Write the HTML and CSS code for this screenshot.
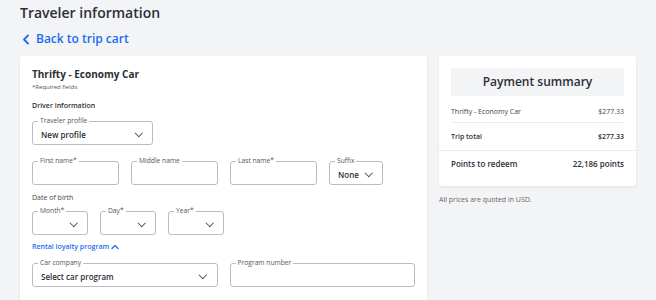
FILE: index.html
```html
<!DOCTYPE html>
<html lang="en">
<head>
    <meta charset="UTF-8">
    <meta name="viewport" content="width=device-width, initial-scale=1.0">
    <title>Traveler information</title>
    <link rel="stylesheet" href="styles.css">
</head>
<body>
    <h1 class="page-title">Traveler information</h1>
    <a class="back-link" href="#">
        <svg width="8" height="11" viewBox="0 0 8 11"><path d="M6 1.5 L2 5.5 L6 9.5" fill="none" stroke="#1a6df0" stroke-width="1.8" stroke-linecap="round" stroke-linejoin="round"/></svg>
        Back to trip cart
    </a>

    <div class="layout">
        <div class="card form-card">
            <h2 class="car-title">Thrifty - Economy Car</h2>
            <div class="required">*Required fields</div>
            <div class="section-label">Driver information</div>

            <div class="field select w-profile">
                <span class="label">Traveler profile</span>
                <span class="value">New profile</span>
                <span class="chev"></span>
            </div>

            <div class="row name-row">
                <div class="field w-name"><span class="label">First name*</span></div>
                <div class="field w-name"><span class="label">Middle name</span></div>
                <div class="field w-name"><span class="label">Last name*</span></div>
                <div class="field select w-suffix">
                    <span class="label">Suffix</span>
                    <span class="value">None</span>
                    <span class="chev"></span>
                </div>
            </div>

            <div class="section-label dob">Date of birth</div>
            <div class="row">
                <div class="field select w-date"><span class="label">Month*</span><span class="chev"></span></div>
                <div class="field select w-date"><span class="label">Day*</span><span class="chev"></span></div>
                <div class="field select w-date"><span class="label">Year*</span><span class="chev"></span></div>
            </div>

            <a class="loyalty" href="#">Rental loyalty program
                <svg width="8" height="6" viewBox="0 0 8 6"><path d="M1 4.5 L4 1.5 L7 4.5" fill="none" stroke="#1a6df0" stroke-width="1.3" stroke-linecap="round" stroke-linejoin="round"/></svg>
            </a>
            <div class="row">
                <div class="field select w-half">
                    <span class="label">Car company</span>
                    <span class="value">Select car program</span>
                    <span class="chev"></span>
                </div>
                <div class="field w-half"><span class="label">Program number</span></div>
            </div>
        </div>

        <div class="side">
            <div class="card summary">
                <div class="summary-head">Payment summary</div>
                <div class="sum-row item"><span>Thrifty - Economy Car</span><span>$277.33</span></div>
                <div class="sum-row total"><span>Trip total</span><span>$277.33</span></div>
                <div class="sum-row points"><span>Points to redeem</span><span>22,186 points</span></div>
            </div>
            <p class="note">All prices are quoted in USD.</p>
        </div>
    </div>
</body>
</html>
```

FILE: styles.css
```css
body
{
    margin: 0;
    padding: 0 20px;
    background-color: #f3f4f6;
    font-family: "Open Sans", "Noto Sans", sans-serif;
    color: #2b2f36;
}
.page-title
{
    margin: 0;
    padding-top: 3px;
    font-size: 14px;
    font-weight: 600;
    line-height: 20px;
}
.back-link
{
    display: flex;
    align-items: center;
    gap: 6px;
    margin-top: 8px;
    padding-left: 2px;
    color: #1a6df0;
    font-size: 12px;
    font-weight: 600;
    text-decoration: none;
    line-height: 16px;
}
.layout
{
    display: flex;
    align-items: flex-start;
    gap: 12px;
    margin-top: 9px;
}
.card
{
    background: #fff;
    border-radius: 3px;
    box-shadow: 0 1px 3px rgba(0, 0, 0, 0.08);
}
.form-card
{
    width: 407px;
    height: 260px;
    padding: 11px 12px 0 12px;
    box-sizing: border-box;
}
.car-title
{
    margin: 0;
    font-size: 10px;
    font-weight: 700;
    line-height: 14px;
}
.required
{
    font-size: 6px;
    color: #555;
    margin-top: 2px;
}
.section-label
{
    font-size: 7px;
    font-weight: 600;
    margin-top: 10px;
}
.section-label.dob
{
    font-weight: 400;
    color: #444;
    margin-top: 8px;
}
.row
{
    display: flex;
    gap: 12px;
}
.name-row
{
    margin-top: 16px;
}
.field
{
    position: relative;
    height: 24px;
    border: 1px solid #b9bcc2;
    border-radius: 3px;
    box-sizing: border-box;
    display: flex;
    align-items: center;
    padding: 0 8px;
}
.label
{
    position: absolute;
    top: -5px;
    left: 5px;
    padding: 0 2px;
    background: #fff;
    font-size: 6.7px;
    line-height: 8px;
    color: #555;
}
.value
{
    font-size: 8px;
    font-weight: 600;
    margin-top: 2px;
}
.chev
{
    position: absolute;
    right: 11px;
    top: 8px;
    width: 4.5px;
    height: 4.5px;
    border-right: 1px solid #444;
    border-bottom: 1px solid #444;
    transform: rotate(45deg);
}
.w-profile
{
    width: 121px;
    margin-top: 11px;
}
.w-name
{
    width: 87px;
}
.w-suffix
{
    width: 54px;
}
.w-date
{
    width: 56px;
    margin-top: 9px;
}
.w-half
{
    width: 186px;
}
.loyalty
{
    display: flex;
    align-items: center;
    gap: 2px;
    margin: 7px 0 12px;
    color: #1a6df0;
    font-size: 7px;
    font-weight: 600;
    text-decoration: none;
}
.side
{
    width: 198px;
}
.summary
{
    padding: 12px 12px 10px;
}
.summary-head
{
    background: #f3f4f6;
    height: 28px;
    line-height: 28px;
    text-align: center;
    font-size: 12px;
    font-weight: 600;
    margin-bottom: 3px;
}
.sum-row
{
    display: flex;
    justify-content: space-between;
    font-size: 7px;
    line-height: 10px;
    color: #444;
    padding: 8px 0 5px;
}
.sum-row.item
{
    border-bottom: 1px solid #eceef1;
}
.sum-row.total
{
    font-weight: 600;
    color: #2b2f36;
    margin: 0 -12px;
    padding: 9px 12px 8px;
    border-bottom: 1px solid #eceef1;
}
.sum-row.points
{
    font-size: 8px;
    font-weight: 600;
    color: #2b2f36;
    padding-top: 8px;
    padding-bottom: 7px;
}
.note
{
    margin: 9px 0 0;
    font-size: 7px;
    color: #666;
}
```
